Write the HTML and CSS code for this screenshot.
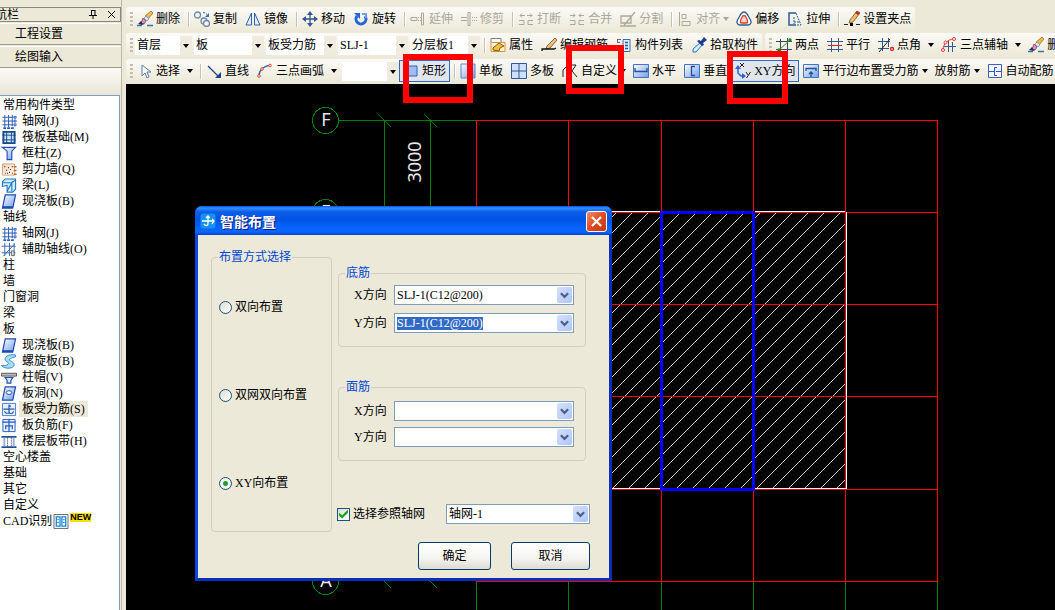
FILE: index.html
```html
<!DOCTYPE html>
<html lang="zh-CN">
<head>
<meta charset="utf-8">
<title>智能布置</title>
<link rel="stylesheet" href="styles.css">
</head>
<body>
<svg class="sprite" aria-hidden="true">
  <defs>
    <linearGradient id="g-blue" x1="0" y1="0" x2="1" y2="1"><stop offset="0" stop-color="#fff"/><stop offset="1" stop-color="#6f9df0"/></linearGradient>
    <linearGradient id="g-sand" x1="0" y1="0" x2="1" y2="1"><stop offset="0" stop-color="#f6cfae"/><stop offset="1" stop-color="#fff"/></linearGradient>
    <symbol id="caret" viewBox="0 0 6 4"><path d="M0 0h6L3 4z" fill="currentColor"/></symbol>
    <symbol id="chev" viewBox="0 0 10 7"><path d="M1 1l4 4 4-4" fill="none" stroke="#4d6185" stroke-width="2.4"/></symbol>
    <symbol id="brush" viewBox="0 0 16 16"><path d="M14 0l2 2-5 6-3-3z" fill="#f0b840" stroke="#8a6a3a" stroke-width=".7"/><path d="M9 5l3 3-2 2-3-3z" fill="#dbe8fb" stroke="#6a7fb0" stroke-width=".7"/><path d="M6 7l3 3-2 3-3-1z" fill="#e88ab4" stroke="#7b3050" stroke-width=".7"/><path d="M1 13l3-3 1 2 2 1-2 1z" fill="#1d2f66"/><path d="M0 14.500h5M10 14.500h6" stroke="#3a70a8" stroke-width="1.500"/></symbol>
    <symbol id="copy" viewBox="0 0 16 16"><g fill="#eef3f8" stroke="#7488a0" stroke-width="1.300"><circle cx="3.500" cy="4" r="3"/><circle cx="10" cy="10" r="3"/><circle cx="12.500" cy="12.500" r="3"/></g><path d="M9 1.500c2 0 3 1 4 2" fill="none" stroke="#2c6cc4" stroke-dasharray="2 1"/><path d="M15 2v4h-4z" fill="#2c6cc4"/></symbol>
    <symbol id="mirror" viewBox="0 0 16 16"><path d="M6.500 2v12H1zM9.500 2v12H15z" fill="#e4eefb" stroke="#2d62b4"/></symbol>
    <symbol id="move" viewBox="0 0 16 16"><path d="M8 2v12M2 8h12" stroke="#2f5791" stroke-width="1.300"/><path d="M8 0l3 4H5zM8 16l3-4H5zM0 8l4-3v6zM16 8l-4-3v6z" fill="#2f5791"/></symbol>
    <symbol id="rotate" viewBox="0 0 16 16"><path d="M4 5a5 5 0 1 0 8 0" fill="none" stroke="#2665d8" stroke-width="3"/><path d="M1 2h6v6z" fill="#2665d8"/><path d="M9 3h4v4" fill="none" stroke="#6f9df0" stroke-width="2"/></symbol>
    <symbol id="extend" viewBox="0 0 16 16"><path d="M1 6.500h6v3H1zM11.500 2h2v12h-2z" fill="none" stroke="currentColor"/><path d="M8 6.500h3M8 9.500h3" stroke="currentColor" stroke-dasharray="1 1"/></symbol>
    <symbol id="trim" viewBox="0 0 16 16"><path d="M0 6.500h6M0 9.500h6M7 1.500h2v13H7z" fill="none" stroke="currentColor"/><path d="M11 6.500h5M11 9.500h5" stroke="currentColor" stroke-dasharray="1 1"/></symbol>
    <symbol id="break" viewBox="0 0 16 16"><path d="M1 9.500h5v4H1M15 9.500h-5v4h5M7 4.500H2M9 4.500h5M4 2.500l-2 2 2 2M12 2.500l2 2-2 2" fill="none" stroke="currentColor"/></symbol>
    <symbol id="merge" viewBox="0 0 16 16"><path d="M1 9.500h5v4H1M15 9.500h-5v4h5M6 4.500H1M10 4.500h5M4 2.500l2 2-2 2M12 2.500l-2 2 2 2" fill="none" stroke="currentColor"/></symbol>
    <symbol id="split" viewBox="0 0 16 16"><path d="M1 5h10v7H1zM15 1L5 13l-1 2M0 15h16" fill="none" stroke="currentColor" stroke-width="1.300"/></symbol>
    <symbol id="align" viewBox="0 0 16 16"><path d="M2.500 1v14M5 3.500h4v4H5zM5 10.500h8v4H5z" fill="none" stroke="currentColor"/></symbol>
    <symbol id="offset" viewBox="0 0 16 16"><path d="M8 1c3 0 4 4 6 7s1 6-2 6H4c-3 0-4-3-2-6s3-7 6-7z" fill="#fff" stroke="#2b5c93" stroke-width="1.300"/><path d="M8 4.500c2 0 2 2 3 4s1 3.500-1 3.500H6c-2 0-2-1.500-1-3.500s1-4 3-4z" fill="#fbd5cc" stroke="#d8442a" stroke-width="1.300"/></symbol>
    <symbol id="stretch" viewBox="0 0 16 16"><path d="M9 2H2v12h7" fill="none" stroke="#2b5c93" stroke-width="1.500"/><path d="M9 2l5 12H9M7 6v7M7 11h5" fill="none" stroke="#2b5c93" stroke-dasharray="2 1"/></symbol>
    <symbol id="pencil" viewBox="0 0 16 16"><path d="M13 0l3 2-7 9-4 1 1-3z" fill="#efc070" stroke="#7b4a20" stroke-width=".8"/><path d="M13 0l3 2-2 2-3-2z" fill="#b53022"/><path d="M0 13.500h4M12 13.500h4" stroke="#222"/><path d="M6 12h3v3H6z"/></symbol>
    <symbol id="props" viewBox="0 0 16 16"><path d="M1 1.500h10v4H1z" fill="#fff" stroke="#76808e"/><path d="M1 5.500h14v9H1z" fill="#fff4dc" stroke="#f28a28"/><path d="M3 11l6-5 5 3-4 2-1 3-6-1z" fill="#e8c148" stroke="#7a601e"/></symbol>
    <symbol id="editbar" viewBox="0 0 16 16"><path d="M14 1l2 2-7 8-4 1 1-3z" fill="#ebc078" stroke="#74431b" stroke-width=".8"/><path d="M1 14v-2h12l2-1" fill="none" stroke="#111" stroke-width="1.300"/></symbol>
    <symbol id="list" viewBox="0 0 16 16"><path d="M7 2.500h7v12H7z" fill="#e5effd" stroke="#396cad"/><path d="M9 5.500h3M9 8.500h3M9 11.500h3" stroke="#2458a0" stroke-width="1.300"/><path d="M1 2.500h4M1 5.500h3M1.500 2v4" stroke="#667"/></symbol>
    <symbol id="pick" viewBox="0 0 16 16"><path d="M10 5l2 2-7 8H2v-3z" fill="#d8ecff" stroke="#2d73c4"/><path d="M8 3l2 1 3-4 3 3-4 3 1 2-2 1-5-5z" fill="#17408f"/></symbol>
    <symbol id="two" viewBox="0 0 16 16"><path d="M4.500 2v14M11.500 1v14M0 4.500h16M0 12.500h16" stroke="#37496a"/><path d="M2 14L15 2" stroke="#339b26"/><circle cx="3" cy="13" r="1.700" fill="#28831c"/><circle cx="14" cy="3" r="1.700" fill="#28831c"/></symbol>
    <symbol id="para" viewBox="0 0 16 16"><path d="M4.500 1v14M11.500 1v14M0 4.500h16M0 12.500h16" stroke="#37598e"/><path d="M1 8.500h14" stroke="#de2222"/></symbol>
    <symbol id="angle" viewBox="0 0 16 16"><path d="M4.500 1v13M10.500 1v9M0 4.500h12M0 11.500h11" stroke="#37598e"/><path d="M1 15L12 2" stroke="#222"/><circle cx="14" cy="12" r="1.500" fill="none" stroke="#d22" stroke-width="1.300"/></symbol>
    <symbol id="axis3" viewBox="0 0 16 16"><path d="M7.500 4v11M11.500 5v10M3 9.500h12" stroke="#37598e"/><path d="M2 13C2 7 7 2 13 2" fill="none" stroke="#e33"/><g fill="#fff" stroke="#e33"><circle cx="2" cy="13" r="1.500"/><circle cx="4.500" cy="5.500" r="1.500"/><circle cx="13" cy="2" r="1.500"/></g></symbol>
    <symbol id="cursor" viewBox="0 0 16 16"><path d="M5 2v11l3-3 2 5 2-1-2-5h4z" fill="#f5f9ff" stroke="#5a7fae"/></symbol>
    <symbol id="line" viewBox="0 0 16 16"><path d="M2 3l10 10" stroke="#1d438d" stroke-width="1.300"/><path d="M15 15v-6l-6 6z" fill="#1d438d"/></symbol>
    <symbol id="arc" viewBox="0 0 16 16"><path d="M2 13C2 7 7 3 14 2" fill="none" stroke="#3568ae" stroke-width="1.500"/><g fill="#fff" stroke="#d44a2a"><circle cx="2" cy="13" r="1.300"/><circle cx="5" cy="6" r="1.300"/><circle cx="13" cy="2.500" r="1.300"/></g></symbol>
    <symbol id="rect" viewBox="0 0 16 16"><path d="M2 3h12v10H2z" fill="#9dbdf6" stroke="#2f62c4"/></symbol>
    <symbol id="single" viewBox="0 0 16 16"><path d="M1 1h14v14H1z" fill="url(#g-blue)" stroke="#5684ce"/></symbol>
    <symbol id="multi" viewBox="0 0 16 16"><path d="M.500.500h15v15H.500z" fill="#cfe0fa" stroke="#31589c"/><path d="M8 1v14M1 8h14" stroke="#31589c"/></symbol>
    <symbol id="custom" viewBox="0 0 16 16"><path d="M1 14V7l5-5h8l-4 6 5 6" fill="none" stroke="#222"/></symbol>
    <symbol id="horiz" viewBox="0 0 16 16"><path d="M.500 1.500h15v13H.500z" fill="url(#g-blue)" stroke="#4673bd"/><path d="M2 5v3.500h12V5" fill="none" stroke="#24508f" stroke-width="1.300"/></symbol>
    <symbol id="vert" viewBox="0 0 16 16"><path d="M.500 1.500h15v13H.500z" fill="url(#g-blue)" stroke="#4673bd"/><path d="M11 3.500H7.500v9H11" fill="none" stroke="#24508f" stroke-width="1.300"/></symbol>
    <symbol id="xy" viewBox="0 0 16 16"><path d="M3 5v5l3 3h4" fill="none" stroke="#2f65c8" stroke-width="1.500"/><path d="M3 2l3 4H0zM7 10l4 3-4 3z" fill="#2f65c8"/><path d="M5 0l4 4M9 0L5 4M11 9l2 3M15.500 9l-4 6" stroke="#222"/></symbol>
    <symbol id="edge" viewBox="0 0 16 16"><path d="M.500 1.500h15v13H.500z" fill="url(#g-blue)" stroke="#4673bd"/><path d="M3 8V5.500h10V8M8 14V9M6 11l2-2 2 2" fill="none" stroke="#24508f" stroke-width="1.300"/></symbol>
    <symbol id="auto" viewBox="0 0 16 16"><path d="M1.500 1.500h13v13h-13z" fill="#f3f6ff" stroke="#3f62b8"/><path d="M10 4.500H7.500v8H10M2 8.500h5M9 8.500h5" fill="none" stroke="#2857c4"/></symbol>
    <symbol id="grid" viewBox="0 0 16 16"><path d="M3.500 1v13M7.500 1v13M11.500 1v12M1 3.500h12M1 7.500h12M1 11.500h12" stroke="#2459b8"/><path d="M13.500 2.500h2v2h-2zM13.500 6.500h2v2h-2zM13.500 10.500h2v2h-2z" fill="#fff" stroke="#2459b8"/><path d="M2 14h3v2H2zM6 14h3v2H6zM10 14h3v2h-3z" fill="#2459b8"/></symbol>
    <symbol id="raft" viewBox="0 0 16 16"><path d="M2 2h12v12H2z" fill="#cfe2fa" stroke="#164a8c" stroke-width="2"/><path d="M5.500 2v12M10.500 2v12M1 5.500h14M1 10.500h14" stroke="#164a8c"/></symbol>
    <symbol id="column" viewBox="0 0 16 16"><path d="M1 1.500h14l-4 4v9H6v-9z" fill="url(#g-blue)" stroke="#204eb0" stroke-width="1.200"/></symbol>
    <symbol id="wall" viewBox="0 0 16 16"><path d="M1 2h13v12H1z" fill="url(#g-sand)" stroke="#d0a080"/><path d="M3 5h1M7 6h1M5 9h1M9 8h1M8 11h1M4 12h1M11 12h1M11 5h1M6 12h1" stroke="#333" stroke-width="1.300"/><path d="M13 5h3M13 9h3M13 13h3" stroke="#cf6319" stroke-width="1.500"/></symbol>
    <symbol id="beam" viewBox="0 0 16 16"><path d="M1 4l3-3h11v11l-3 3H6V8L1 9z" fill="#d5ecff" stroke="#2279c4" stroke-width="1.200"/><path d="M1 5h10l4-3M6 14l5-9v9" fill="none" stroke="#2279c4" stroke-width="1.200"/></symbol>
    <symbol id="slab" viewBox="0 0 16 16"><path d="M4 1h11l-3 14H1z" fill="url(#g-blue)" stroke="#1d4cae" stroke-width="1.300"/><path d="M1 14h11" stroke="#1d4cae" stroke-width="2"/></symbol>
    <symbol id="aux" viewBox="0 0 16 16"><path d="M3.500 1v14M8.500 1v14M0 4.500h15M0 11.500h15M13.500 1v14" stroke="#3867b5"/><path d="M2 15L14 2" stroke="#3867b5"/><path d="M10.500 9.500h3v5h-3z" fill="#ddd" stroke="#666"/></symbol>
    <symbol id="spiral" viewBox="0 0 16 16"><path d="M15 1C7 0 3 3 4 6s5 3 3 5-5 1-7 1c2 4 11 4 13 1s-2-5-4-6 1-3 6-4z" fill="#a9dcf8" stroke="#2583ca"/></symbol>
    <symbol id="cap" viewBox="0 0 16 16"><path d="M0 3.500h16v3H0z" fill="#bbb" stroke="#555"/><path d="M4 8h8l-2 3v3H6v-3z" fill="#dce8ff" stroke="#2252b4" stroke-width="1.300"/></symbol>
    <symbol id="hole" viewBox="0 0 16 16"><path d="M4 1h11l-3 14H1z" fill="url(#g-blue)" stroke="#1d4cae" stroke-width="1.300"/><ellipse cx="8" cy="7" rx="3" ry="2" fill="#fff" stroke="#1d4cae"/></symbol>
    <symbol id="rebar" viewBox="0 0 16 16"><path d="M1 1.500h14v13H1z" fill="#e6effd" stroke="#4b79c6"/><path d="M2 7.500h12M8 3v7c0 3 4 3 5 0M8 3l2 2M3 10l2 2h3" fill="none" stroke="#2559ac" stroke-width="1.300"/></symbol>
    <symbol id="neg" viewBox="0 0 16 16"><path d="M1.500 1.500h13v13h-13z" fill="#e6effd" stroke="#2559c0"/><path d="M1 4.500h14M8 1v14M4.500 12V8.500h7V12" fill="none" stroke="#2559c0" stroke-width="1.300"/></symbol>
    <symbol id="band" viewBox="0 0 16 16"><path d="M0 3h16M0 14h16" stroke="#1f4f9c" stroke-width="2"/><path d="M3 4v9M13 4v9" stroke="#8fb0e8" stroke-width="2"/><path d="M6.500 4v9M10.500 4v9" stroke="#222" stroke-dasharray="1 1"/></symbol>
    <symbol id="cad" viewBox="0 0 16 16"><path d="M.500.500h15v15H.500z" fill="#eef6fd" stroke="#666"/><path d="M3 3h4v10H3zM9 3h4v10H9z" fill="#fff" stroke="#1684d8" stroke-width="1.300"/><path d="M4 6h2M4 9h2M10 6h2M10 9h2" stroke="#1684d8"/></symbol>
    <symbol id="app" viewBox="0 0 16 16"><rect x=".500" y=".500" width="15" height="15" rx="3" fill="#1691f4"/><path d="M2 8h12M8 3v8c0 2-3 2-4 0M6 5l2-2 2 2M12 6l2 2-2 3" fill="none" stroke="#fff" stroke-width="1.300"/></symbol>
  </defs>
</svg>

<div class="app">
  <aside class="sidebar">
    <header class="dock-title">
      <span class="dock-name">航栏</span>
      <button class="dock-btn" aria-label="固定"><svg class="dock-icon" viewBox="0 0 9 9"><path d="M2.500 0v5M2 .500h4M0 5.500h8M4 6v3M6 0v5" fill="none" stroke="#000"/></svg></button>
      <button class="dock-btn" aria-label="关闭"><svg class="dock-icon" viewBox="0 0 9 9"><path d="M1 1l7 7M8 1L1 8" stroke="#000"/></svg></button>
    </header>
    <button class="nav-btn">工程设置</button>
    <button class="nav-btn">绘图输入</button>
    <div class="nav-strip"></div>
    <ul class="tree">
      <li class="cat">常用构件类型</li>
      <li class="leaf"><svg><use href="#grid"/></svg><span>轴网(J)</span></li>
      <li class="leaf"><svg><use href="#raft"/></svg><span>筏板基础(M)</span></li>
      <li class="leaf"><svg><use href="#column"/></svg><span>框柱(Z)</span></li>
      <li class="leaf"><svg><use href="#wall"/></svg><span>剪力墙(Q)</span></li>
      <li class="leaf"><svg><use href="#beam"/></svg><span>梁(L)</span></li>
      <li class="leaf"><svg><use href="#slab"/></svg><span>现浇板(B)</span></li>
      <li class="cat">轴线</li>
      <li class="leaf"><svg><use href="#grid"/></svg><span>轴网(J)</span></li>
      <li class="leaf"><svg><use href="#aux"/></svg><span>辅助轴线(O)</span></li>
      <li class="cat">柱</li>
      <li class="cat">墙</li>
      <li class="cat">门窗洞</li>
      <li class="cat">梁</li>
      <li class="cat">板</li>
      <li class="leaf"><svg><use href="#slab"/></svg><span>现浇板(B)</span></li>
      <li class="leaf"><svg><use href="#spiral"/></svg><span>螺旋板(B)</span></li>
      <li class="leaf"><svg><use href="#cap"/></svg><span>柱帽(V)</span></li>
      <li class="leaf"><svg><use href="#hole"/></svg><span>板洞(N)</span></li>
      <li class="leaf current"><svg><use href="#rebar"/></svg><span>板受力筋(S)</span></li>
      <li class="leaf"><svg><use href="#neg"/></svg><span>板负筋(F)</span></li>
      <li class="leaf"><svg><use href="#band"/></svg><span>楼层板带(H)</span></li>
      <li class="cat">空心楼盖</li>
      <li class="cat">基础</li>
      <li class="cat">其它</li>
      <li class="cat">自定义</li>
      <li class="cat">CAD识别<svg><use href="#cad"/></svg><b class="new">NEW</b></li>
    </ul>
  </aside>

  <main class="main">
    <div class="toolbars">
      <div class="row">
        <div class="strip">
          <i class="grip"></i>
          <button class="tool"><svg><use href="#brush"/></svg>删除</button>
          <i class="sep"></i>
          <button class="tool"><svg><use href="#copy"/></svg>复制</button>
          <button class="tool"><svg><use href="#mirror"/></svg>镜像</button>
          <i class="sep"></i>
          <button class="tool"><svg><use href="#move"/></svg>移动</button>
          <button class="tool"><svg><use href="#rotate"/></svg>旋转</button>
          <i class="sep"></i>
          <button class="tool" disabled><svg><use href="#extend"/></svg>延伸</button>
          <button class="tool" disabled><svg><use href="#trim"/></svg>修剪</button>
          <i class="sep"></i>
          <button class="tool" disabled><svg><use href="#break"/></svg>打断</button>
          <button class="tool" disabled><svg><use href="#merge"/></svg>合并</button>
          <button class="tool" disabled><svg><use href="#split"/></svg>分割</button>
          <i class="sep"></i>
          <button class="tool drop" disabled><svg><use href="#align"/></svg>对齐<svg class="caret"><use href="#caret"/></svg></button>
          <button class="tool"><svg><use href="#offset"/></svg>偏移</button>
          <button class="tool"><svg><use href="#stretch"/></svg>拉伸</button>
          <i class="sep"></i>
          <button class="tool"><svg><use href="#pencil"/></svg>设置夹点</button>
        </div>
      </div>
      <div class="row">
        <div class="strip">
          <i class="grip"></i>
          <div class="picks">
            <span class="pick short"><select aria-label="楼层"><option>首层</option></select><svg class="caret"><use href="#caret"/></svg></span>
            <span class="pick"><select aria-label="构件大类"><option>板</option></select><svg class="caret"><use href="#caret"/></svg></span>
            <span class="pick"><select aria-label="构件类型"><option>板受力筋</option></select><svg class="caret"><use href="#caret"/></svg></span>
            <span class="pick"><select aria-label="构件"><option>SLJ-1</option></select><svg class="caret"><use href="#caret"/></svg></span>
            <span class="pick"><select aria-label="分层"><option>分层板1</option></select><svg class="caret"><use href="#caret"/></svg></span>
          </div>
          <i class="sep"></i>
          <button class="tool"><svg><use href="#props"/></svg>属性</button>
          <button class="tool"><svg><use href="#editbar"/></svg>编辑钢筋</button>
          <button class="tool"><svg><use href="#list"/></svg>构件列表</button>
          <button class="tool"><svg><use href="#pick"/></svg>拾取构件</button>
        </div>
        <div class="strip fill">
          <i class="grip"></i>
          <button class="tool"><svg><use href="#two"/></svg>两点</button>
          <button class="tool"><svg><use href="#para"/></svg>平行</button>
          <button class="tool drop wide"><svg><use href="#angle"/></svg>点角<svg class="caret"><use href="#caret"/></svg></button>
          <button class="tool drop wide"><svg><use href="#axis3"/></svg>三点辅轴<svg class="caret"><use href="#caret"/></svg></button>
          <button class="tool"><svg><use href="#brush"/></svg>删除</button>
        </div>
      </div>
      <div class="row">
        <div class="strip fill">
          <i class="grip"></i>
          <button class="tool drop wide"><svg><use href="#cursor"/></svg>选择<svg class="caret"><use href="#caret"/></svg></button>
          <i class="sep"></i>
          <button class="tool"><svg><use href="#line"/></svg>直线</button>
          <button class="tool drop wide"><svg><use href="#arc"/></svg>三点画弧<svg class="caret"><use href="#caret"/></svg></button>
          <div class="picks"><span class="pick short"><select aria-label="画弧方式"><option></option></select><svg class="caret"><use href="#caret"/></svg></span></div>
          <button class="tool on"><svg><use href="#rect"/></svg>矩形</button>
          <i class="sep"></i>
          <button class="tool"><svg><use href="#single"/></svg>单板</button>
          <button class="tool"><svg><use href="#multi"/></svg>多板</button>
          <button class="tool drop"><svg><use href="#custom"/></svg>自定义<svg class="caret"><use href="#caret"/></svg></button>
          <button class="tool"><svg><use href="#horiz"/></svg>水平</button>
          <button class="tool"><svg><use href="#vert"/></svg>垂直</button>
          <button class="tool on"><svg><use href="#xy"/></svg>XY方向</button>
          <button class="tool drop"><svg><use href="#edge"/></svg>平行边布置受力筋<svg class="caret"><use href="#caret"/></svg></button>
          <button class="tool drop">放射筋<svg class="caret"><use href="#caret"/></svg></button>
          <button class="tool"><svg><use href="#auto"/></svg>自动配筋</button>
        </div>
      </div>
    </div>

    <div class="canvas">
      <svg class="drawing" viewBox="126 84 929 526" width="929" height="526" shape-rendering="crispEdges">
        <defs>
          <pattern id="hatch" width="16" height="16" patternUnits="userSpaceOnUse"><path d="M-1 14L14 -1M12 17L17 12" stroke="#c8c8c8"/></pattern>
        </defs>
        <path d="M476 212H845V488H476z" fill="url(#hatch)"/>
        <g fill="none" stroke="#008000">
          <path d="M338 120.500H476M384.500 120V581M430.500 120V581"/>
          <path d="M476.500 582V610M568.500 582V610M661.500 582V610M753.500 582V610M845.500 582V610M937.500 582V610"/>
          <path d="M378 114l13 13M424 114l13 13M378 575l13 13M424 575l13 13"/>
          <circle cx="325.500" cy="120.500" r="13"/>
          <circle cx="325.500" cy="212.500" r="13"/>
          <circle cx="325.500" cy="581.500" r="13"/>
        </g>
        <path d="M476 120.500H937M476 212.500H937M476 304.500H937M476 396.500H937M476 489.500H937M476 581.500H937M476.500 120V582M568.500 120V582M661.500 120V582M753.500 120V582M845.500 120V582M937.500 120V582" stroke="#f00"/>
        <path d="M476 211.500H845M846.500 212V489M476 488.500H846" stroke="#fff"/>
        <path d="M661.500 212.500H753.500V489.500H661.500z" fill="none" stroke="#00f" stroke-width="3"/>
        <g class="axis-text">
          <text x="326" y="126" text-anchor="middle">F</text>
          <text x="326" y="218" text-anchor="middle">E</text>
          <text x="326" y="587" text-anchor="middle">A</text>
          <text transform="translate(421 162) rotate(-90)" text-anchor="middle">3000</text>
        </g>
      </svg>

      <section class="dialog" role="dialog" aria-labelledby="dlg-title">
        <header class="dlg-head">
          <svg class="dlg-icon"><use href="#app"/></svg>
          <h1 id="dlg-title">智能布置</h1>
          <button class="dlg-close" aria-label="关闭"><svg viewBox="0 0 12 12"><path d="M1 1l10 10M11 1L1 11" stroke="#fff" stroke-width="2.400"/></svg></button>
        </header>
        <form class="dlg-body">
          <fieldset class="group modes">
            <legend>布置方式选择</legend>
            <label class="choice"><input type="radio" name="mode">双向布置</label>
            <label class="choice"><input type="radio" name="mode">双网双向布置</label>
            <label class="choice"><input type="radio" name="mode" checked>XY向布置</label>
          </fieldset>
          <div class="settings">
            <fieldset class="group bars">
              <legend>底筋</legend>
              <div class="field"><label for="bx">X方向</label><span class="combo"><select id="bx"><option>SLJ-1(C12@200)</option></select><i class="arrow"><svg><use href="#chev"/></svg></i></span></div>
              <div class="field"><label for="by">Y方向</label><span class="combo"><select id="by" class="picked"><option>SLJ-1(C12@200)</option></select><i class="arrow"><svg><use href="#chev"/></svg></i></span></div>
            </fieldset>
            <fieldset class="group bars tight">
              <legend>面筋</legend>
              <div class="field"><label for="tx">X方向</label><span class="combo"><select id="tx"><option></option></select><i class="arrow"><svg><use href="#chev"/></svg></i></span></div>
              <div class="field"><label for="ty">Y方向</label><span class="combo"><select id="ty"><option></option></select><i class="arrow"><svg><use href="#chev"/></svg></i></span></div>
            </fieldset>
            <div class="axis-row">
              <label class="choice"><input type="checkbox" checked>选择参照轴网</label>
              <span class="combo"><select aria-label="参照轴网"><option>轴网-1</option></select><i class="arrow"><svg><use href="#chev"/></svg></i></span>
            </div>
            <div class="actions">
              <button type="button" class="btn ok">确定</button>
              <button type="button" class="btn cancel">取消</button>
            </div>
          </div>
        </form>
      </section>
    </div>
  </main>

  <div class="mark mark-rect"></div>
  <div class="mark mark-custom"></div>
  <div class="mark mark-xy"></div>
</div>
</body>
</html>
```

FILE: styles.css
```css
* { box-sizing: border-box; }

body {
  margin: 0;
  background: #ece9d8;
  color: #000;
  font: 12px/16px "Liberation Serif", "Noto Sans CJK SC", serif;
}

button, select, input { font: inherit; color: inherit; margin: 0; }
button { border: 0; background: none; padding: 0; white-space: nowrap; }
svg { display: block; flex: none; }
.sprite { position: absolute; width: 0; height: 0; }

.app { position: relative; display: flex; height: 100vh; overflow: hidden; }

/* sidebar */
.sidebar {
  display: flex;
  flex-direction: column;
  flex: none;
  width: 122px;
  padding-top: 7px;
  border-right: 1px solid #bcb9aa;
}
.dock-title {
  display: flex;
  align-items: center;
  gap: 9px;
  height: 15px;
  padding-right: 4px;
  border: 1px solid #8a887b;
  border-left: 0;
}
.dock-name { flex: 1; text-indent: -5px; }
.dock-btn { width: 9px; height: 9px; }
.dock-icon { width: 9px; height: 9px; }
.nav-btn {
  height: 22px;
  margin-top: 1px;
  padding-left: 15px;
  text-align: left;
  border-top: 1px solid #fff;
  border-bottom: 1px solid #9d9a8c;
}
.nav-strip {
  height: 27px;
  background: linear-gradient(#fbfaf6, #e9e6d6);
}
.tree {
  flex: 1;
  width: 120px;
  margin: 0;
  padding: 1px 0 0;
  list-style: none;
  background: #fff;
  border-top: 1px solid #7f9db9;
  border-right: 1px solid #7f9db9;
  overflow: hidden;
}
.cat, .leaf { display: flex; align-items: center; height: 16px; white-space: nowrap; }
.cat { gap: 1px; padding-left: 3px; }
.leaf { gap: 2px; padding-left: 1px; }
.tree svg { width: 16px; height: 15px; }
.leaf span { padding: 0 3px; }
.current span { background: #ece9d8; }
.new {
  align-self: flex-start;
  background: #ffe000;
  font: bold 9px/9px "Liberation Sans", sans-serif;
}

/* toolbars */
.main { display: flex; flex-direction: column; flex: 1; min-width: 0; margin-left: 4px; }
.toolbars { display: flex; flex-direction: column; gap: 2px; padding: 7px 0 1px; overflow: hidden; }
.row { display: flex; gap: 3px; }
.strip {
  display: flex;
  align-items: center;
  flex: none;
  height: 24px;
  padding-left: 4px;
  border-radius: 3px;
  background: linear-gradient(#fbfaf6, #ece9d8);
}
.fill { flex: 1 0 auto; }
.grip {
  flex: none;
  width: 3px;
  height: 15px;
  background: repeating-linear-gradient(#c1beae 0 2px, transparent 2px 4px);
}
.sep { flex: none; width: 6px; height: 15px; border-right: 1px solid #fff; background: linear-gradient(90deg, transparent 4px, #c5c2b2 4px); }
.tool {
  display: flex;
  align-items: center;
  flex: none;
  gap: 3px;
  height: 22px;
  padding: 0 4px;
}
.tool svg { width: 16px; height: 16px; }
.tool:disabled { color: #aca899; }
.tool.on {
  padding: 0 3px;
  border: 1px solid #316ac5;
  background: #e1e6ee;
}
.tool .caret, .pick .caret { width: 6px; height: 4px; }
.drop { padding-right: 3px; }
.wide .caret { margin-left: 4px; }
.picks { display: flex; gap: 2px; padding-left: 2px; }
.pick {
  position: relative;
  display: flex;
  width: 70px;
  height: 19px;
  background: #fff;
  border-right: 12px solid #efecdf;
}
.pick.short { width: 57px; }
.pick .caret { position: absolute; right: -9px; top: 8px; pointer-events: none; }
.pick select { flex: 1; min-width: 0; padding: 0 2px; border: 0; background: none; appearance: none; }

/* drawing area */
.canvas { position: relative; flex: 1; min-height: 0; background: #000; overflow: hidden; }
.axis-text { fill: #e8e8e8; font: 18px "Noto Sans", sans-serif; }

/* dialog */
.dialog {
  position: absolute;
  left: 69px;
  top: 122px;
  width: 417px;
  border: 3px solid #0a47e0;
  border-top: 0;
  border-right-color: #0a2fb8;
  border-bottom-color: #0a2fb8;
  border-radius: 7px 7px 0 0;
  background: #ece9d8;
}
.dlg-head {
  display: flex;
  align-items: center;
  gap: 4px;
  height: 29px;
  margin: 0 -3px;
  padding: 1px 5px 0;
  border-radius: 7px 7px 0 0;
  background: linear-gradient(#0a50d8, #3090ff 2px, #0a5ce8 6px, #0054e3 14px, #0866ff 23px, #0866ff 26px, #0040c8);
}
.dlg-icon { width: 16px; height: 16px; }
.dlg-head h1 {
  flex: 1;
  margin: 0;
  color: #fff;
  font: bold 14px/18px "Noto Sans CJK SC", sans-serif;
  text-shadow: 1px 1px #0a1883;
}
.dlg-close {
  display: grid;
  place-items: center;
  width: 21px;
  height: 21px;
  border: 1px solid #fff;
  border-radius: 3px;
  background: linear-gradient(135deg, #ee8e70, #e04a20 50%, #c23a10);
}
.dlg-close svg { width: 11px; height: 11px; }
.dlg-body {
  display: grid;
  grid-template-columns: 121px 1fr;
  gap: 6px;
  padding: 14px 19px 8px 13px;
}
.group {
  min-width: 0;
  margin: 0;
  padding: 0 8px;
  border: 1px solid #d0d0bf;
  border-radius: 4px;
}
.group legend { padding: 0 1px; color: #0046d5; }
.modes {
  display: flex;
  flex-direction: column;
  gap: 72px;
  height: 283px;
  padding: 34px 0 0 7px;
}
.modes legend { margin-left: -1px; }
.choice { display: flex; align-items: center; gap: 3px; white-space: nowrap; }
.choice input {
  flex: none;
  width: 13px;
  height: 13px;
  appearance: none;
  border: 1px solid #1c5180;
  background: linear-gradient(135deg, #dcdcd7, #fff);
}
.choice input[type="radio"] { border-radius: 50%; }
.choice input[type="radio"]:checked { background: radial-gradient(#21a121 0 2px, #f4f4f0 3px); }
.choice input[type="checkbox"] { display: grid; place-items: center; }
.choice input[type="checkbox"]:checked::before {
  content: "";
  width: 9px;
  height: 9px;
  background: #21a121;
  clip-path: polygon(0 35%, 35% 65%, 100% 0, 100% 35%, 35% 100%, 0 70%);
}
.settings { display: flex; flex-direction: column; padding-top: 16px; }
.bars {
  display: flex;
  flex-direction: column;
  gap: 8px;
  margin: 0 4px 32px 0;
  padding: 4px 11px 13px 15px;
}
.bars legend { margin-left: -9px; }
.tight { gap: 6px; margin-bottom: 43px; padding-top: 6px; }
.field { display: grid; grid-template-columns: 40px 1fr; align-items: center; }
.combo {
  display: grid;
  height: 20px;
  border: 1px solid #7f9db9;
  background: #fff;
}
.combo select, .combo .arrow { grid-area: 1 / 1; }
.combo select {
  min-width: 0;
  width: 100%;
  height: 18px;
  padding: 0 2px;
  border: 0;
  background: none;
  appearance: none;
}
.combo .picked {
  color: #fff;
  background: linear-gradient(#316ac5, #316ac5) 2px 3px / 86px 13px no-repeat;
}
.arrow {
  display: grid;
  place-items: center;
  justify-self: end;
  width: 15px;
  margin: 1px;
  border-radius: 2px;
  background: linear-gradient(135deg, #d5e0fd, #aec6f8);
  pointer-events: none;
}
.arrow svg { width: 9px; height: 7px; }
.axis-row {
  display: grid;
  grid-template-columns: 1fr 144px;
  align-items: center;
  margin-left: -1px;
}
.actions { display: flex; justify-content: flex-end; gap: 20px; padding-top: 18px; }
.btn {
  height: 28px;
  border: 1px solid #003c74;
  border-radius: 3px;
  background: linear-gradient(#fff, #f4f4f0 60%, #dedbce);
}
.ok { width: 73px; }
.cancel { width: 79px; }

/* highlight frames over the toolbar */
.mark { position: absolute; border: 6px solid #f00; pointer-events: none; }
.mark-rect { left: 403px; top: 54px; width: 70px; height: 49px; }
.mark-custom { left: 566px; top: 45px; width: 58px; height: 49px; }
.mark-xy { left: 727px; top: 51px; width: 61px; height: 53px; }
```
